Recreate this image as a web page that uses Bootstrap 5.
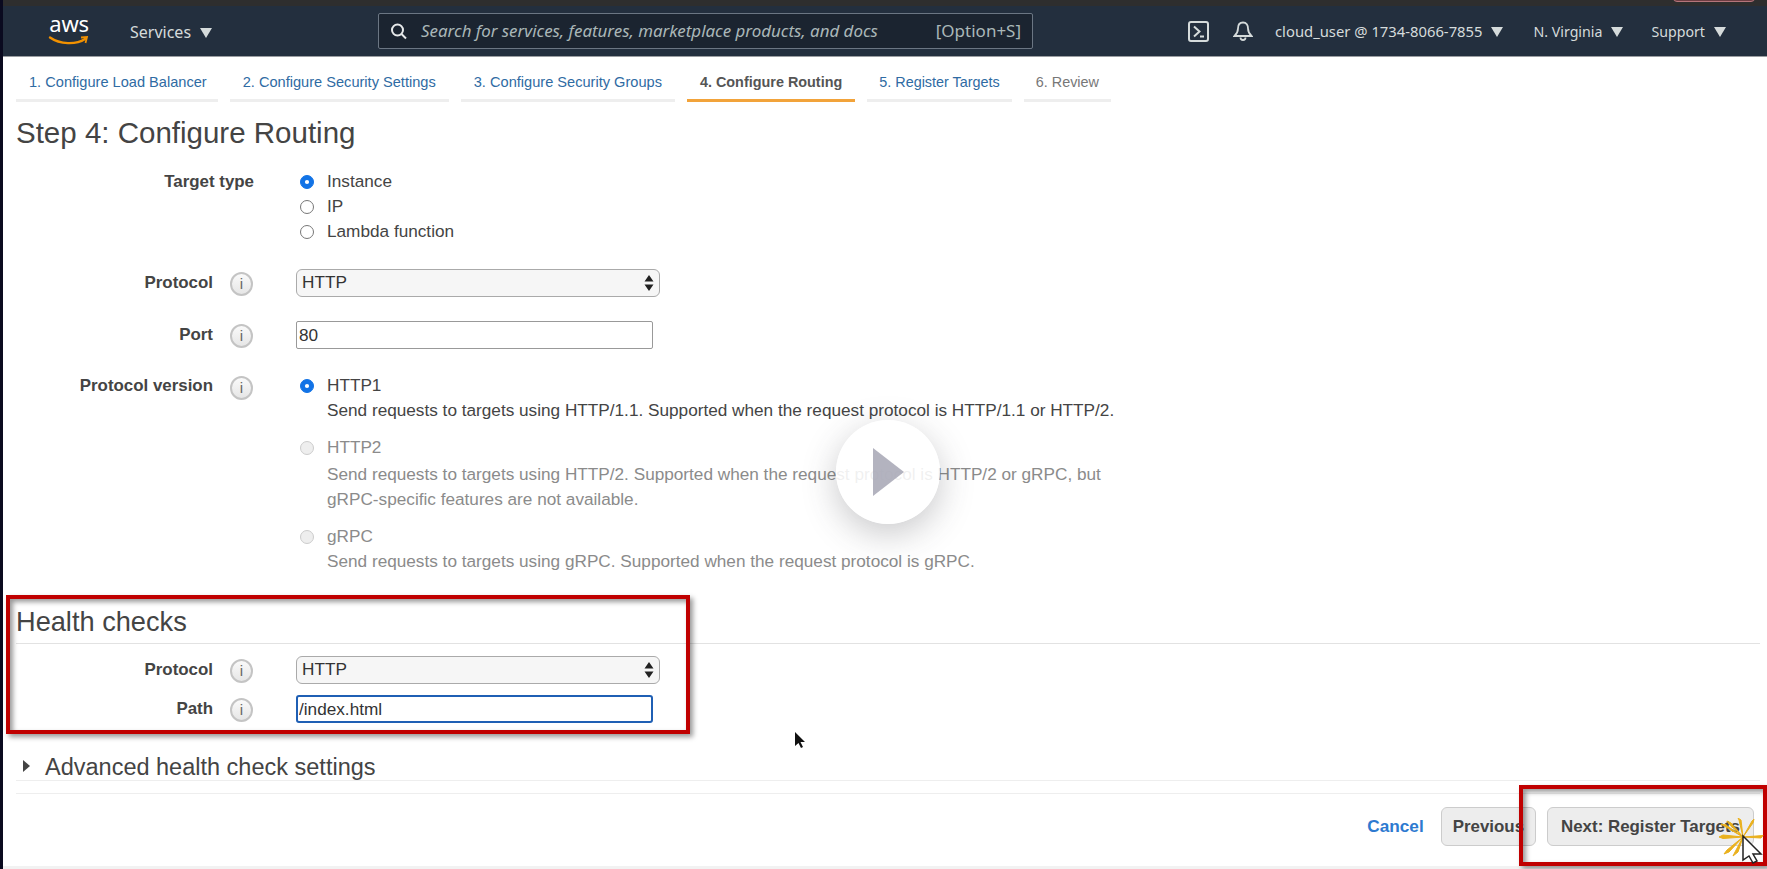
<!DOCTYPE html>
<html lang="en">
<head>
<meta charset="UTF-8">
<meta name="viewport" content="width=device-width, initial-scale=1.0">
<title>Step 4: Configure Routing</title>
<link href="https://cdn.jsdelivr.net/npm/bootstrap@5.3.0/dist/css/bootstrap.min.css" rel="stylesheet">
<style>
html, body { height: 100%; }
body {
    background: #fff;
    font-family: "Liberation Sans", Arial, sans-serif;
    font-size: 17.2px;
    color: #444;
    overflow: hidden;
}
.app-frame { position: relative; height: 869px; border-left: 3px solid #0a0a1f; overflow: hidden; }

/* top of the browser, cut off */
.chrome-strip { height: 6px; background: #2e2e2e; position: relative; }
.chrome-pill { position: absolute; left: 1670px; top: -6px; width: 82px; height: 8px; border: 1px solid #b5757a; border-radius: 4px; background: #6e3d42; }

/* console bar */
.console-bar { height: 51px; background: #232f3e; color: #d5dbdb; font-family: "Noto Sans", sans-serif; font-size: 14.2px; padding: 0; flex-wrap: nowrap; border-bottom: 1px solid #9a9da1; }
.aws-logo { width: 42px; margin-left: 45px; margin-right: 40px; text-align: center; position: relative; height: 36px; }
.aws-word { display: block; color: #fff; font-size: 22px; line-height: 24px; margin-top: -2px; letter-spacing: -.3px; }
.aws-smile { position: absolute; left: 0; top: 22px; }
.tri-down { display: inline-block; width: 0; height: 0; border-left: 6px solid transparent; border-right: 6px solid transparent; border-top: 10px solid #d5dbdb; margin-left: 9px; }
.services-item { font-size: 16px; }
.user-item { font-size: 14.8px; margin-left: 22px; }
.region-item { margin-left: 30px; }
.search-box { width: 655px; height: 36px; margin-left: 166px; border: 1px solid #6b7683; border-radius: 2px; background: #1b2430; padding: 0 11px; color: #aab7b8; }
.search-box svg { margin-right: 13px; flex: none; }
.search-box em { font-size: 16.9px; white-space: nowrap; }
.search-key { font-size: 17px; margin-left: auto; white-space: nowrap; }
.bar-right { margin-left: auto; padding-right: 41px; }
.bar-item { white-space: nowrap; padding-top: 1px; }

/* wizard tabs */
.wizard-tabs { padding: 0 0 0 13px; height: 45px; gap: 12px; flex-wrap: nowrap; }
.wizard-tabs .nav-link { height: 45px; padding: 15px 13px 0; font-size: 14.6px; line-height: 20px; color: #2f6ba3; border-bottom: 3px solid #eee; white-space: nowrap; }
.wizard-tabs .nav-item:first-child .nav-link { padding-right: 11px; }
.wizard-tabs .nav-link.active { color: #555; font-size: 14.4px; font-weight: 700; border-bottom-color: #f2a33a; }
.wizard-tabs .nav-item:nth-child(n+5) .nav-link { font-size: 14.4px; padding-left: 12px; padding-right: 12px; }
.wizard-tabs .nav-link.disabled { color: #777; }

.page-title { font-size: 29.5px; font-weight: 400; line-height: 34px; color: #444; margin: 14px 0 0 13px; }
.section-title { font-size: 27.2px; font-weight: 400; line-height: 32px; color: #444; margin: 0 0 0 13px; }

/* form rows */
.field-row { display: flex; align-items: flex-start; }
.field-label { width: 210px; text-align: right; font-weight: 700; font-size: 16.9px; color: #444; line-height: 25px; flex: none; }
.field-label.no-info { width: 251px; }
.field-info { width: 83px; flex: none; padding-left: 17px; }
.field-info.no-info { width: 42px; padding: 0; }
.info-dot { display: block; width: 23px; height: 24px; border-radius: 50%; border: 2px solid #c4c4c4; background: linear-gradient(#fafafa, #e6e6e6); color: #666; font-size: 15px; line-height: 20px; text-align: center; margin-top: 3px; }
.field-body { flex: none; }
.select-row .field-label { margin-top: 1px; }

.aws-select, .aws-input { font-family: "Liberation Sans", Arial, sans-serif; font-size: 17.2px; color: #333; height: 28px; padding: 0 5px; min-height: 0; }
.aws-select { width: 364px; border: 1px solid #aaa; border-radius: 6px; background-color: #f6f6f6; background-size: 10px 16px; background-position: right 5px center; background-repeat: no-repeat;
    background-image: url("data:image/svg+xml,%3Csvg xmlns='http://www.w3.org/2000/svg' viewBox='0 0 10 16'%3E%3Cpath d='M5 0 9.5 6.5H.5zM5 16 .5 9.5h9z' fill='%23222'/%3E%3C/svg%3E"); }
.aws-input { width: 357px; border: 1px solid #999; border-radius: 2px; padding: 0 2px; }
.aws-input.is-focused { width: 357px; border: 2px solid #1f5fb4; border-radius: 3px; padding: 0 1px; }

.radio-line { display: flex; align-items: center; height: 25px; margin: 0; padding: 0; font-size: 17.2px; color: #444; line-height: 25px; }
.radio-line .form-check-input { width: 14px; height: 14px; margin: 0 13px 0 4px; border: 1px solid #777; flex: none; float: none; }
.radio-line .form-check-input:checked[type=radio] { background-color: #1273e6; border-color: #1273e6;
    background-image: url("data:image/svg+xml,%3Csvg xmlns='http://www.w3.org/2000/svg' viewBox='-4 -4 8 8'%3E%3Ccircle r='1.400' fill='%23fff'/%3E%3C/svg%3E"); }
.radio-help { line-height: 25px; font-size: 17.2px; color: #444; padding-left: 31px; height: 25px; white-space: nowrap; }
.is-off { color: #8b8b8b; }
.is-off .form-check-input { opacity: 1; background: #eee; border-color: #ccc; }
.tall-line { margin-bottom: 2px; }

.soft-rule { border-top: 1px solid #e2e2e2; margin: 0 7px 0 13px; opacity: 1; }
.soft-rule.lighter { border-top-color: #eee; }
.adv-toggle { font-size: 23.500px; line-height: 25px; margin-left: 20px; color: #444; }
.adv-toggle i { display: inline-block; width: 0; height: 0; border-top: 6px solid transparent; border-bottom: 6px solid transparent; border-left: 7px solid #444; margin-right: 15px; vertical-align: 3px; }

.gap-a { margin-top: 24px; }

/* bottom buttons */
.wizard-actions { display: flex; justify-content: flex-end; align-items: center; gap: 11px; margin-top: 13px; padding-right: 13px; }
.wizard-actions .btn-link { color: #2d7ad0; font-weight: 700; font-size: 17.2px; text-decoration: none; padding: 0; margin-right: 5px; }
.btn-aws { height: 39px; padding: 0 13px; background: #ededed; border: 1px solid #ccc; border-radius: 6px; color: #444; font-weight: 700; font-size: 16.9px; white-space: nowrap; }
.btn-aws.btn-back { padding: 0 11px; }
.bottom-tint { position: absolute; left: 0; right: 0; bottom: 0; height: 3px; background: #f2f2f2; }

/* things lying over the page */
.red-box { position: absolute; border: 4px solid #c00000; box-shadow: 3px 3px 5px rgba(0,0,0,.4), inset 3px 3px 5px rgba(0,0,0,.4); pointer-events: none; }
.red-box.health { left: 3px; top: 595px; width: 684px; height: 139px; }
.red-box.next { left: 1516px; top: 785px; width: 248px; height: 81px; }
.play-disc { position: absolute; left: 833px; top: 420px; width: 104px; height: 104px; border-radius: 50%; background: rgba(255,255,255,.87); box-shadow: 0 10px 34px rgba(60,60,70,.28); display: flex; align-items: center; justify-content: center; }
.over-svg { position: absolute; }
</style>
</head>
<body>
<div class="app-frame">
    <div class="chrome-strip"><span class="chrome-pill"></span></div>

    <nav class="navbar console-bar">
        <div class="aws-logo">
            <span class="aws-word">aws</span>
            <svg class="aws-smile" width="42" height="12" viewBox="0 0 42 12"><path d="M2 2.500C12 9.500 28 10 37 4" fill="none" stroke="#f29100" stroke-width="2.400" stroke-linecap="round"/><path d="M33 2.500 39 2 37.500 8" fill="none" stroke="#f29100" stroke-width="1.800"/></svg>
        </div>
        <span class="bar-item services-item">Services<span class="tri-down"></span></span>
        <div class="search-box d-flex align-items-center">
            <svg width="18" height="18" viewBox="0 0 18 18"><circle cx="7.500" cy="8" r="5.500" fill="none" stroke="#e6e9ea" stroke-width="2"/><path d="m11.500 12 4.500 4.500" stroke="#e6e9ea" stroke-width="2"/></svg>
            <em>Search for services, features, marketplace products, and docs</em>
            <span class="search-key">[Option+S]</span>
        </div>
        <div class="bar-right d-flex align-items-center">
            <svg width="21" height="21" viewBox="0 0 21 21"><rect x="1" y="1" width="19" height="19" rx="2" fill="none" stroke="#d5dbdb" stroke-width="2"/><path d="M6 5.500 11.500 10.500 6 15.500M12 15.500h4" fill="none" stroke="#d5dbdb" stroke-width="2"/></svg>
            <svg width="20" height="21" viewBox="0 0 20 21" class="ms-4"><path d="M10 1.500c-3.500 0-5 2.800-5 6 0 3-1 5-3.500 7.500h17c-2.500-2.500-3.500-4.500-3.500-7.500 0-3.200-1.500-6-5-6z" fill="none" stroke="#d5dbdb" stroke-width="1.800"/><path d="M7.500 16.500a2.500 2.500 0 0 0 5 0" fill="none" stroke="#d5dbdb" stroke-width="1.800"/></svg>
            <span class="bar-item user-item">cloud_user @ 1734-8066-7855<span class="tri-down"></span></span>
            <span class="bar-item region-item">N. Virginia<span class="tri-down"></span></span>
            <span class="bar-item ms-4 ps-1">Support<span class="tri-down"></span></span>
        </div>
    </nav>

    <ul class="nav wizard-tabs">
        <li class="nav-item"><a class="nav-link" href="#">1. Configure Load Balancer</a></li>
        <li class="nav-item"><a class="nav-link" href="#">2. Configure Security Settings</a></li>
        <li class="nav-item"><a class="nav-link" href="#">3. Configure Security Groups</a></li>
        <li class="nav-item"><a class="nav-link active" href="#">4. Configure Routing</a></li>
        <li class="nav-item"><a class="nav-link" href="#">5. Register Targets</a></li>
        <li class="nav-item"><a class="nav-link disabled" href="#">6. Review</a></li>
    </ul>

    <h1 class="page-title">Step 4: Configure Routing</h1>

    <form onsubmit="return false">
        <div class="field-row" style="margin-top:19px">
            <div class="field-label no-info">Target type</div>
            <div class="field-info no-info"></div>
            <div class="field-body">
                <label class="radio-line"><input class="form-check-input" type="radio" name="target" checked>Instance</label>
                <label class="radio-line"><input class="form-check-input" type="radio" name="target">IP</label>
                <label class="radio-line"><input class="form-check-input" type="radio" name="target">Lambda function</label>
            </div>
        </div>

        <div class="field-row select-row" style="margin-top:25px">
            <div class="field-label">Protocol</div>
            <div class="field-info"><span class="info-dot">i</span></div>
            <div class="field-body"><select class="form-select aws-select"><option>HTTP</option></select></div>
        </div>

        <div class="field-row select-row gap-a">
            <div class="field-label">Port</div>
            <div class="field-info"><span class="info-dot">i</span></div>
            <div class="field-body"><input class="form-control aws-input" type="text" value="80"></div>
        </div>

        <div class="field-row gap-a">
            <div class="field-label">Protocol version</div>
            <div class="field-info"><span class="info-dot">i</span></div>
            <div class="field-body">
                <label class="radio-line"><input class="form-check-input" type="radio" name="version" checked>HTTP1</label>
                <div class="radio-help">Send requests to targets using HTTP/1.1. Supported when the request protocol is HTTP/1.1 or HTTP/2.</div>
                <div class="is-off mt-2 pt-1">
                    <label class="radio-line is-off tall-line"><input class="form-check-input" type="radio" name="version" disabled>HTTP2</label>
                    <div class="radio-help is-off">Send requests to targets using HTTP/2. Supported when the request protocol is HTTP/2 or gRPC, but</div>
                    <div class="radio-help is-off">gRPC-specific features are not available.</div>
                </div>
                <div class="is-off mt-2 pt-1">
                    <label class="radio-line is-off"><input class="form-check-input" type="radio" name="version" disabled>gRPC</label>
                    <div class="radio-help is-off">Send requests to targets using gRPC. Supported when the request protocol is gRPC.</div>
                </div>
            </div>
        </div>

        <h2 class="section-title" style="margin-top:32px">Health checks</h2>
        <hr class="soft-rule" style="margin-top:5px">

        <div class="field-row select-row" style="margin-top:12px">
            <div class="field-label">Protocol</div>
            <div class="field-info"><span class="info-dot">i</span></div>
            <div class="field-body"><select class="form-select aws-select"><option>HTTP</option></select></div>
        </div>
        <div class="field-row select-row" style="margin-top:11px">
            <div class="field-label">Path</div>
            <div class="field-info"><span class="info-dot">i</span></div>
            <div class="field-body"><input class="form-control aws-input is-focused" type="text" value="/index.html"></div>
        </div>

        <div class="adv-toggle" style="margin-top:32px"><i></i>Advanced health check settings</div>
        <hr class="soft-rule lighter" style="margin-top:0">
        <hr class="soft-rule lighter" style="margin-top:12px">

        <div class="wizard-actions">
            <button class="btn btn-link" type="button">Cancel</button>
            <button class="btn btn-aws btn-back" type="button">Previous</button>
            <button class="btn btn-aws" type="button">Next: Register Targets</button>
        </div>
    </form>
    <div class="bottom-tint"></div>

    <div class="play-disc">
        <svg width="32" height="48" viewBox="0 0 32 48"><path d="M1 0 32 24 1 48z" fill="#a6a6b4" fill-opacity=".85"/></svg>
    </div>
    <div class="red-box health"></div>
    <div class="red-box next"></div>

    <svg class="over-svg" style="left:790px;top:731px" width="16" height="20" viewBox="0 0 16 20"><path d="M2 1v14l3.500-3 2.500 5 2-1-2.500-5H12z" fill="#111"/></svg>
    <svg class="over-svg" style="left:1712px;top:818px" width="50" height="46" viewBox="0 0 50 46"><path d="M28 19 8 17 4 19 8 20.500ZM28 19 48 17.500 46 20ZM28 19 14 6 12 3 16 5ZM28 19 37 3 39 1 38 5ZM28 19 12 32 9 36 14 34ZM28 19 24 2 23 0 26 2ZM28 19 9 8 6 6 11 7ZM28 19 20 34 18 38 23 34Z" fill="#eab11d" stroke="#eab11d" stroke-width="1"/><path d="M28 18v24l6-4 4 7 4-2-4-7h8z" fill="#fff" stroke="#222" stroke-width="1.500"/></svg>
</div>
<script src="https://cdn.jsdelivr.net/npm/bootstrap@5.3.0/dist/js/bootstrap.bundle.min.js"></script>
</body>
</html>
